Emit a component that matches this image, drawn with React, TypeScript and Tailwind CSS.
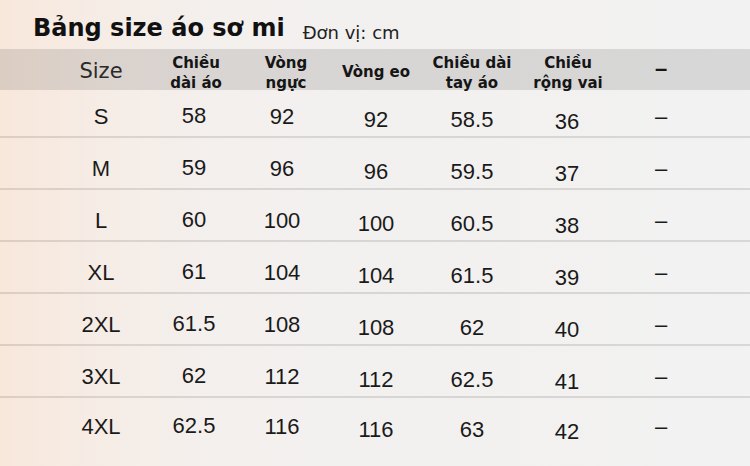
import React from "react";

const rows = [
  ["S", "58", "92", "92", "58.5", "36", "–"],
  ["M", "59", "96", "96", "59.5", "37", "–"],
  ["L", "60", "100", "100", "60.5", "38", "–"],
  ["XL", "61", "104", "104", "61.5", "39", "–"],
  ["2XL", "61.5", "108", "108", "62", "40", "–"],
  ["3XL", "62", "112", "112", "62.5", "41", "–"],
  ["4XL", "62.5", "116", "116", "63", "42", "–"],
];

const cellPb = ["pb-[7px]", "pb-[8px]", "pb-[7px]", "pb-[4px]", "pb-[4px]", "pb-[2px]", "pb-[7px]"];

const gridCols = "grid grid-cols-[92px_94px_82px_106px_86px_104px_84px] pl-[55px]";

const hdr = "flex justify-center font-['DejaVu_Sans',sans-serif] font-bold text-[15px] leading-[20px] text-center whitespace-nowrap text-[#151515]";

export default function App() {
  return (
    <div className="w-[750px] h-[466px] overflow-hidden bg-[linear-gradient(90deg,#f8e7db_0%,#f6ece5_12%,#f3f0ee_30%,#f2f2f2_100%)] text-[#151515]">
      {/* Title */}
      <div className="h-[49px] flex items-start pl-[33px] pt-[14px]">
        <span className="font-['DejaVu_Sans',sans-serif] font-bold text-[24px] leading-[28px] text-[#111]">
          Bảng size áo sơ mi
        </span>
        <span className="ml-[18px] mt-[6px] font-['DejaVu_Sans',sans-serif] text-[18px] leading-[26px] text-[#222]">
          Đơn vị: cm
        </span>
      </div>

      {/* Header band */}
      <div className={`${gridCols} h-[41px] bg-black/[0.11]`}>
        <div className="flex justify-center pt-[10px] font-['DejaVu_Sans',sans-serif] text-[21px] leading-[24px] text-[#2a2a2a]">
          Size
        </div>
        <div className={`${hdr} pt-[4px] pl-[4px]`}>
          <span>
            Chiều
            <br />
            dài áo
          </span>
        </div>
        <div className={`${hdr} pt-[4px] pl-[8px]`}>
          <span>
            Vòng
            <br />
            ngực
          </span>
        </div>
        <div className={`${hdr} pt-[13px]`}>Vòng eo</div>
        <div className={`${hdr} pt-[4px]`}>
          <span>
            Chiều dài
            <br />
            tay áo
          </span>
        </div>
        <div className={`${hdr} pt-[4px] pl-[2px]`}>
          <span>
            Chiều
            <br />
            rộng vai
          </span>
        </div>
        <div className="flex justify-center pt-[8px] font-['Liberation_Sans',Arial,sans-serif] font-bold text-[22px] leading-[24px]">
          –
        </div>
      </div>

      {/* Data rows */}
      {rows.map((r, i) => {
        const h = i === 0 ? "h-[48px]" : i === rows.length - 1 ? "h-[50px]" : "h-[52px]";
        const border = i === rows.length - 1 ? "border-b-2 border-transparent" : "border-b-2 border-black/[0.11]";
        return (
          <div key={r[0]} className={`${gridCols} ${h} ${border}`}>
            {r.map((v, j) => (
              <div
                key={j}
                className={`flex items-end justify-center ${cellPb[j]} font-['Liberation_Sans',Arial,sans-serif] text-[22px] leading-[24px] text-[#1a1a1a]`}
              >
                {v}
              </div>
            ))}
          </div>
        );
      })}
    </div>
  );
}
